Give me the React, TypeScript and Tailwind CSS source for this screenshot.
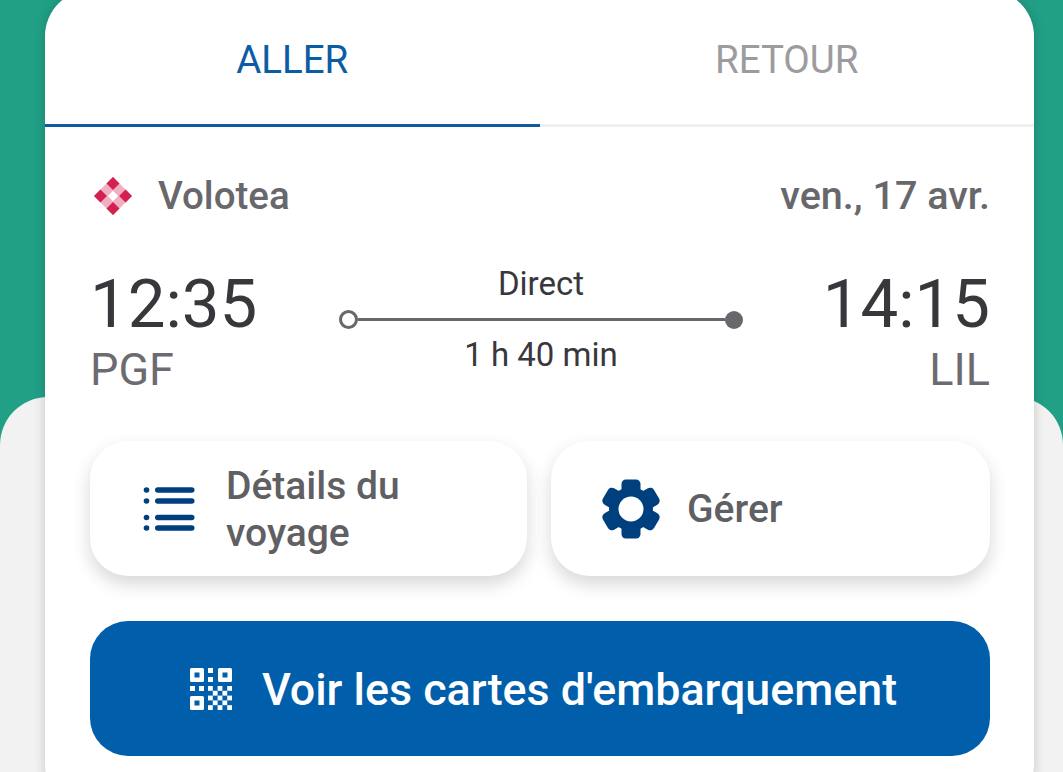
import React from 'react';

const VoloteaLogo = () => (
  <svg width="38" height="38" viewBox="3.500 3.500 31 31" className="ml-[4px] shrink-0">
    <g transform="rotate(45 19 19)">
      <rect x="8" y="8" width="22" height="22" fill="#f0b0c2" />
      <rect x="8" y="8" width="7.500" height="7.500" fill="#d2204f" />
      <rect x="22.500" y="8" width="7.500" height="7.500" fill="#d2204f" />
      <rect x="8" y="22.500" width="7.500" height="7.500" fill="#d2204f" />
      <rect x="22.500" y="22.500" width="7.500" height="7.500" fill="#d2204f" />
      <rect x="16" y="16" width="6" height="6" fill="#ffffff" />
    </g>
  </svg>
);

const ListIcon = () => (
  <svg width="52" height="50" viewBox="0 0 52 50" className="shrink-0 text-[#003f7d]" fill="currentColor">
    <circle cx="3.500" cy="6" r="2.800" />
    <circle cx="3.500" cy="17" r="2.800" />
    <circle cx="3.500" cy="33.500" r="2.800" />
    <circle cx="3.500" cy="44" r="2.800" />
    <rect x="12" y="3.200" width="39.500" height="5.600" rx="2.800" />
    <rect x="12" y="14.200" width="39.500" height="5.600" rx="2.800" />
    <rect x="12" y="30.700" width="39.500" height="5.600" rx="2.800" />
    <rect x="12" y="41.200" width="39.500" height="5.600" rx="2.800" />
  </svg>
);

const GearIcon = () => (
  <svg width="60" height="60" viewBox="-30 -30 60 60" className="shrink-0 text-[#003f7d]" fill="currentColor">
    <circle r="22" />
    {[0, 60, 120, 180, 240, 300].map((a) => (
      <rect key={a} x="-9.500" y="-29.500" width="19" height="14" rx="4.500" transform={`rotate(${a})`} />
    ))}
    <circle r="12.500" fill="#ffffff" />
  </svg>
);

const checker = [
  [0, 0], [2, 0], [4, 0],
  [1, 1], [3, 1],
  [0, 2], [2, 2], [4, 2],
  [1, 3], [3, 3],
  [0, 4], [2, 4], [4, 4],
];

const QrIcon = () => (
  <svg width="42" height="42" viewBox="0 0 42 42" className="shrink-0" fill="#ffffff">
    <path fillRule="evenodd" d="M0 1.500A1.500 1.500 0 0 1 1.500 0h11A1.500 1.500 0 0 1 14 1.500v11a1.500 1.500 0 0 1-1.500 1.500h-11A1.500 1.500 0 0 1 0 12.500zM4.500 4.500v5h5v-5z" />
    <path fillRule="evenodd" d="M28 1.500A1.500 1.500 0 0 1 29.500 0h11A1.500 1.500 0 0 1 42 1.500v11a1.500 1.500 0 0 1-1.500 1.500h-11a1.500 1.500 0 0 1-1.500-1.500zM32.500 4.500v5h5v-5z" />
    <path fillRule="evenodd" d="M0 29.500A1.500 1.500 0 0 1 1.500 28h11a1.500 1.500 0 0 1 1.500 1.500v11a1.500 1.500 0 0 1-1.500 1.500h-11A1.500 1.500 0 0 1 0 40.500zM4.500 32.500v5h5v-5z" />
    <rect x="18" y="0" width="5" height="5" />
    <rect x="18" y="9" width="5" height="5" />
    <rect x="0" y="18" width="5" height="5" />
    <rect x="9" y="18" width="5" height="5" />
    {checker.map(([c, r]) => (
      <rect key={`${c}-${r}`} x={18 + c * 4.8} y={18 + r * 4.8} width="4.800" height="4.800" />
    ))}
  </svg>
);

export default function App() {
  return (
    <div className="grid h-[772px] w-[1063px] overflow-hidden bg-[#21a086] font-['Roboto',sans-serif]">
      {/* grey sheet behind the card */}
      <div className="col-start-1 row-start-1 mt-[397px] rounded-t-[48px] bg-[#f2f2f2]"></div>

      <div className="col-start-1 row-start-1 -mt-[10px] ml-[45px] h-[820px] w-[989px] rounded-[46px] bg-white shadow-[0_0_12px_rgba(0,0,0,0.18)]">
        {/* tabs */}
        <div className="flex h-[137px] border-b-[3px] border-[#f0f0f0]">
          <div className="-mb-[3px] flex flex-1 items-center justify-center border-b-[3px] border-[#0f5a9e] pt-[6px] text-[38.500px] text-[#0b5ca5]">
            ALLER
          </div>
          <div className="flex flex-1 items-center justify-center pt-[6px] text-[38.500px] text-[#9c9c9f]">
            RETOUR
          </div>
        </div>

        <div className="pl-[45px] pr-[44px]">
          {/* company and date */}
          <div className="mt-[47px] flex h-[44px] items-center justify-between">
            <div className="flex items-center gap-[26px]">
              <VoloteaLogo />
              <span className="text-[38.500px] font-medium text-[#67676c]">Volotea</span>
            </div>
            <span className="text-[39.500px] font-medium text-[#67676c]">ven., 17 avr.</span>
          </div>

          {/* times */}
          <div className="mt-[50px] flex">
            <div className="flex flex-col">
              <span className="text-[67.200px] leading-[72px] text-[#38383c]">12:35</span>
              <span className="mt-[7px] text-[45px] leading-[46px] text-[#6b6b70]">PGF</span>
            </div>
            <div className="flex flex-1 flex-col items-center pl-[82px] pr-[80px] text-[33px] leading-[38px] text-[#38383c]">
              <span className="-mt-[3px]">Direct</span>
              <div className="mt-[7px] flex h-[19px] w-full items-center">
                <span className="h-[19px] w-[19px] shrink-0 rounded-full border-[3px] border-[#67676c] bg-white"></span>
                <span className="h-[3px] flex-1 bg-[#67676c]"></span>
                <span className="h-[18px] w-[18px] shrink-0 rounded-full bg-[#67676c]"></span>
              </div>
              <span className="mt-[7px]">1 h 40 min</span>
            </div>
            <div className="flex flex-col items-end">
              <span className="text-[67.200px] leading-[72px] text-[#38383c]">14:15</span>
              <span className="mt-[7px] text-[45px] leading-[46px] text-[#6b6b70]">LIL</span>
            </div>
          </div>

          {/* secondary actions */}
          <div className="mt-[48px] flex gap-[24px]">
            <div className="flex h-[135px] w-[437px] items-center gap-[31px] rounded-[38px] bg-white pl-[53px] shadow-[0_8px_18px_rgba(0,0,0,0.16)]">
              <ListIcon />
              <span className="pt-[3px] text-[39px] font-medium leading-[47px] text-[#5f5f64]">
                Détails du
                <br />
                voyage
              </span>
            </div>
            <div className="flex h-[135px] flex-1 items-center gap-[26px] rounded-[38px] bg-white pl-[50px] shadow-[0_8px_18px_rgba(0,0,0,0.16)]">
              <GearIcon />
              <span className="pt-[2px] text-[39px] font-medium text-[#5f5f64]">Gérer</span>
            </div>
          </div>

          {/* main action */}
          <div className="mt-[45px] flex h-[135px] items-center justify-center gap-[30px] rounded-[38px] bg-[#005eaa] pl-[7px]">
            <QrIcon />
            <span className="pt-[3px] text-[44.800px] font-medium text-white">Voir les cartes d'embarquement</span>
          </div>
        </div>
      </div>
    </div>
  );
}
